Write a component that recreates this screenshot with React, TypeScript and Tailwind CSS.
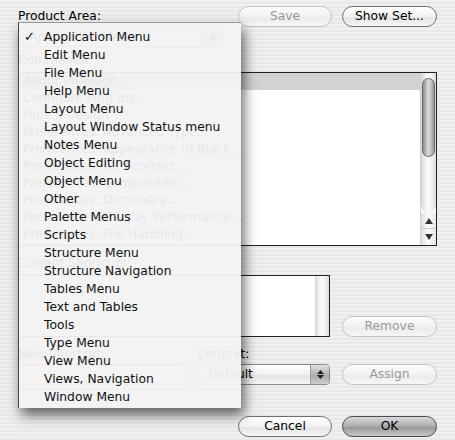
import React from "react";

const menuItems = [
  "Application Menu",
  "Edit Menu",
  "File Menu",
  "Help Menu",
  "Layout Menu",
  "Layout Window Status menu",
  "Notes Menu",
  "Object Editing",
  "Object Menu",
  "Other",
  "Palette Menus",
  "Scripts",
  "Structure Menu",
  "Structure Navigation",
  "Tables Menu",
  "Text and Tables",
  "Tools",
  "Type Menu",
  "View Menu",
  "Views, Navigation",
  "Window Menu",
];

const commands = [
  "About InDesign...",
  "Configure Plug-ins...",
  "Hide InDesign",
  "Preferences: Advanced Type...",
  "Preferences: Appearance of Black...",
  "Preferences: Autocorrect...",
  "Preferences: Composition...",
  "Preferences: Dictionary...",
  "Preferences: Display Performance...",
  "Preferences: File Handling...",
];

const btnBase =
  "h-[21px] rounded-full border flex items-center justify-center text-[12.3px] leading-none shrink-0";
const btnEnabled =
  "border-[#6e6e6e] bg-[linear-gradient(to_bottom,#ffffff,#f2f2f2_50%,#e3e3e3_52%,#f6f6f6)] text-black";
const btnDisabled =
  "border-[#c2c2c2] bg-[linear-gradient(to_bottom,#fbfbfb,#f2f2f2_50%,#eaeaea_52%,#f6f6f6)] text-[#9a9a9a]";
const btnPrimary =
  "border-[#4a4a4a] bg-[linear-gradient(to_bottom,#dadada,#ababab_50%,#979797_52%,#c6c6c6)] text-black";

function PopupArrows() {
  return (
    <div className="w-[19px] h-full rounded-r-[4px] border-l border-[#9a9a9a] bg-[linear-gradient(to_bottom,#e2e2e2,#b4b4b4_50%,#a6a6a6_52%,#cfcfcf)] flex flex-col items-center justify-center gap-[1px]">
      <svg width="7" height="4" viewBox="0 0 7 4">
        <path d="M3.5 0 L7 4 L0 4 Z" fill="#222" />
      </svg>
      <svg width="7" height="4" viewBox="0 0 7 4">
        <path d="M0 0 L7 0 L3.5 4 Z" fill="#222" />
      </svg>
    </div>
  );
}

export default function App() {
  return (
    <div className="relative w-[455px] h-[440px] overflow-hidden bg-[repeating-linear-gradient(180deg,#f0f0f0_0px,#f0f0f0_2px,#e8e8e8_2px,#e8e8e8_4px)] font-['DejaVu_Sans',sans-serif] text-[12.3px] text-black">
      {/* Dialog underneath */}
      <div className="flex flex-col px-[18px]">
        {/* Row 1 */}
        <div className="mt-[6px] flex h-[21px] items-center">
          <span className="flex-1 leading-none">Product Area:</span>
          <div className={`${btnBase} ${btnDisabled} w-[94px]`}>Save</div>
          <div className={`${btnBase} ${btnEnabled} w-[95px] ml-[10px]`}>Show Set...</div>
        </div>
        {/* Product area popup */}
        <div className="mt-0 h-[20px] w-[204px] flex rounded-[4px] border border-[#8a8a8a] bg-[linear-gradient(to_bottom,#ffffff,#f0f0f0_50%,#e4e4e4_52%,#f5f5f5)]">
          <span className="flex-1 pl-[10px] leading-[18px]">Application Menu</span>
          <PopupArrows />
        </div>
        {/* Commands label */}
        <div className="mt-[6px] h-[14px] leading-[14px]">Commands:</div>
        {/* Big list */}
        <div className="mt-[5px] h-[174px] flex border border-[#222] bg-white">
          <div className="flex-1 flex flex-col">
            {commands.map((c, i) => (
              <div
                key={c}
                className={`h-[17px] shrink-0 pl-[4px] leading-[17px] whitespace-nowrap ${
                  i === 0 ? "bg-[#d2d2d2]" : ""
                }`}
              >
                {c}
              </div>
            ))}
          </div>
          <div className="w-[16px] flex flex-col border-l border-[#d0d0d0]">
            <div className="flex-1 flex flex-col items-center rounded-b-[8px] bg-[linear-gradient(to_right,#d6d6d6,#fafafa_40%,#f3f3f3_70%,#dadada)]">
              <div className="mt-[5px] h-[79px] w-[13px] rounded-full border border-[#666] bg-[linear-gradient(to_right,#8f8f8f,#c8c8c8_35%,#dcdcdc_50%,#b6b6b6_80%,#949494)]" />
            </div>
            <div className="h-[16px] flex items-center justify-center border-b border-[#c8c8c8] bg-[linear-gradient(to_right,#e0e0e0,#fbfbfb_50%,#e6e6e6)]">
              <svg width="8" height="6" viewBox="0 0 8 6">
                <path d="M4 0 L8 6 L0 6 Z" fill="#333" />
              </svg>
            </div>
            <div className="h-[16px] flex items-center justify-center bg-[linear-gradient(to_right,#e0e0e0,#fbfbfb_50%,#e6e6e6)]">
              <svg width="8" height="6" viewBox="0 0 8 6">
                <path d="M0 0 L8 0 L4 6 Z" fill="#333" />
              </svg>
            </div>
          </div>
        </div>
        {/* Current shortcuts */}
        <div className="mt-[10px] h-[14px] leading-[14px]">Current Shortcuts:</div>
        <div className="mt-[5px] flex items-end">
          <div className="h-[62px] w-[312px] flex border border-[#222] bg-white">
            <div className="flex-1" />
            <div className="w-[14px] bg-[linear-gradient(to_right,#d6d6d6,#fafafa_40%,#f3f3f3_70%,#dadada)]" />
          </div>
          <div className={`${btnBase} ${btnDisabled} w-[95px] ml-[12px]`}>Remove</div>
        </div>
        {/* Labels */}
        <div className="mt-[10px] h-[14px] flex leading-[14px]">
          <span className="w-[179px]">New Shortcut:</span>
          <span>Context:</span>
        </div>
        <div className="mt-[3px] flex h-[21px]">
          <div className="w-[167px] h-full border border-[#8a8a8a] bg-white shadow-[inset_0_1px_2px_rgba(0,0,0,0.25)]" />
          <div className="ml-[12px] w-[133px] h-full flex rounded-[4px] border border-[#8a8a8a] bg-[linear-gradient(to_bottom,#ffffff,#f0f0f0_50%,#e4e4e4_52%,#f5f5f5)]">
            <span className="flex-1 pl-[10px] leading-[19px]">Default</span>
            <PopupArrows />
          </div>
          <div className={`${btnBase} ${btnDisabled} w-[95px] ml-[12px]`}>Assign</div>
        </div>
        {/* Bottom buttons */}
        <div className="mt-[31px] flex justify-end">
          <div className={`${btnBase} ${btnEnabled} w-[94px]`}>Cancel</div>
          <div className={`${btnBase} ${btnPrimary} w-[95px] ml-[10px]`}>OK</div>
        </div>
      </div>

      {/* Popup menu overlay */}
      <div className="absolute left-[18px] top-[22px] w-[223px] h-[386px] border-l border-t border-l-[#444] border-t-[#9a9a9a] bg-[rgba(242,242,242,0.95)] shadow-[3px_7px_12px_rgba(0,0,0,0.6)] pt-[5px]">
        {menuItems.map((m, i) => (
          <div key={m} className="relative h-[18px] flex items-center whitespace-nowrap text-[#111]">
            {i === 0 && (
              <span className="absolute left-[5px] top-0 leading-[18px] text-[13px] font-bold">✓</span>
            )}
            <span className="pl-[25px] leading-[18px]">{m}</span>
          </div>
        ))}
      </div>
    </div>
  );
}
